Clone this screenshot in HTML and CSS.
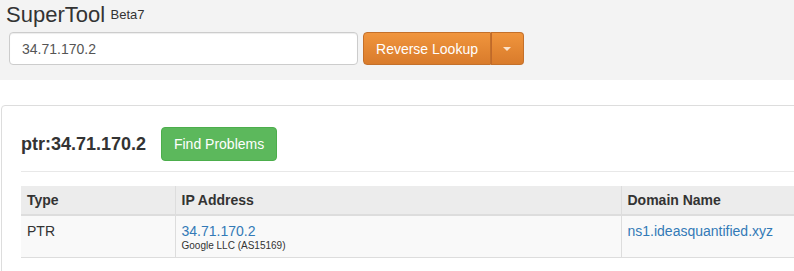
FILE: index.html
```html
<!DOCTYPE html>
<html>
<head>
<meta charset="utf-8">
<link rel="stylesheet" href="styles.css">
</head>
<body>
<div class="top">
  <div class="brand"><span class="name">SuperTool</span> <span class="beta">Beta7</span></div>
  <div class="search">
    <input class="ip" type="text" value="34.71.170.2">
    <div class="btn-group">
      <button class="btn-orange main">Reverse Lookup</button>
      <button class="btn-orange caret-btn"><span class="caret"></span></button>
    </div>
  </div>
</div>
<div class="gap"></div>
<div class="panel">
  <div class="head">
    <h2 class="title">ptr:34.71.170.2</h2>
    <button class="btn-green">Find Problems</button>
  </div>
  <table class="results">
    <thead>
      <tr><th class="c1">Type</th><th class="c2">IP Address</th><th class="c3">Domain Name</th></tr>
    </thead>
    <tbody>
      <tr>
        <td>PTR</td>
        <td><a href="#">34.71.170.2</a><div class="asn">Google LLC (AS15169)</div></td>
        <td><a href="#">ns1.ideasquantified.xyz</a></td>
      </tr>
    </tbody>
  </table>
</div>
</body>
</html>
```
FILE: styles.css
```css
html, body {
  margin: 0;
  padding: 0;
  overflow: hidden;
  background: #fff;
  font-family: "Liberation Sans", Arial, sans-serif;
  color: #333;
  width: 794px;
  height: 271px;
}
.top {
  background: #f3f3f3;
  height: 80px;
  box-sizing: border-box;
  padding: 2px 0 0 6px;
}
.brand {
  height: 30px;
  line-height: 26px;
}
.name {
  font-size: 22px;
  color: #333;
}
.beta {
  font-size: 13px;
  position: relative;
  top: -3px;
  margin-left: 1px;
}
.search {
  display: flex;
  align-items: center;
  margin-left: 3px;
  margin-top: 0;
}
.ip {
  width: 349px;
  height: 33px;
  box-sizing: border-box;
  border: 1px solid #ccc;
  border-radius: 4px;
  background: #fff;
  padding: 0 12px;
  font-family: "Liberation Sans", Arial, sans-serif;
  font-size: 14px;
  color: #555;
  outline: none;
  box-shadow: inset 0 1px 1px rgba(0,0,0,.075);
}
.btn-group {
  display: flex;
  margin-left: 5px;
}
.btn-orange {
  height: 33px;
  box-sizing: border-box;
  border: 1px solid #c4702a;
  background: linear-gradient(#f0953d, #d97b2b);
  color: #fff;
  font-family: "Liberation Sans", Arial, sans-serif;
  font-size: 14px;
  padding: 0 12px;
  margin: 0;
}
.btn-orange.main {
  width: 128px;
  border-radius: 4px 0 0 4px;
}
.btn-orange.caret-btn {
  width: 33px;
  border-left: 0;
  border-radius: 0 4px 4px 0;
  box-shadow: inset 1px 0 0 #c0692a;
  display: flex;
  align-items: center;
  justify-content: center;
  padding: 0;
}
.caret {
  width: 0;
  height: 0;
  border-left: 4px solid transparent;
  border-right: 4px solid transparent;
  border-top: 4px solid #fbe3cc;
}
.gap {
  height: 25px;
}
.panel {
  margin-left: 1px;
  width: 900px;
  border: 1px solid #ddd;
  border-radius: 4px;
  padding: 0 0 20px 19px;
}
.head {
  display: flex;
  align-items: center;
  padding: 21px 0 10px 0;
  border-bottom: 1px solid #e8e8e8;
}
.title {
  margin: 0;
  font-size: 18px;
  font-weight: bold;
  color: #333;
}
.btn-green {
  margin-left: 15px;
  height: 34px;
  width: 116px;
  box-sizing: border-box;
  border: 1px solid #4cae4c;
  border-radius: 4px;
  background: #5cb85c;
  color: #fff;
  font-family: "Liberation Sans", Arial, sans-serif;
  font-size: 14px;
  padding: 0;
}
.results {
  margin-top: 14px;
  border-collapse: collapse;
  width: 880px;
  font-size: 14px;
}
.results th {
  background: #ececec;
  text-align: left;
  font-weight: bold;
  height: 29px;
  padding: 0 6px;
  border-bottom: 2px solid #ddd;
  border-left: 1px solid #ddd;
  box-sizing: border-box;
}
.results th.c1 { width: 154px; border-left: 0; }
.results th.c2 { width: 446px; }
.results td {
  background: #f9f9f9;
  vertical-align: top;
  padding: 7px 6px 5px 6px;
  height: 38px;
  box-sizing: border-box;
  border-left: 1px solid #ddd;
  border-bottom: 1px solid #ddd;
  line-height: 16px;
}
.results td:first-child { border-left: 0; }
.results a {
  color: #337ab7;
  text-decoration: none;
}
.asn {
  font-size: 10px;
  line-height: 12px;
  color: #333;
  margin-top: 1px;
}
```
